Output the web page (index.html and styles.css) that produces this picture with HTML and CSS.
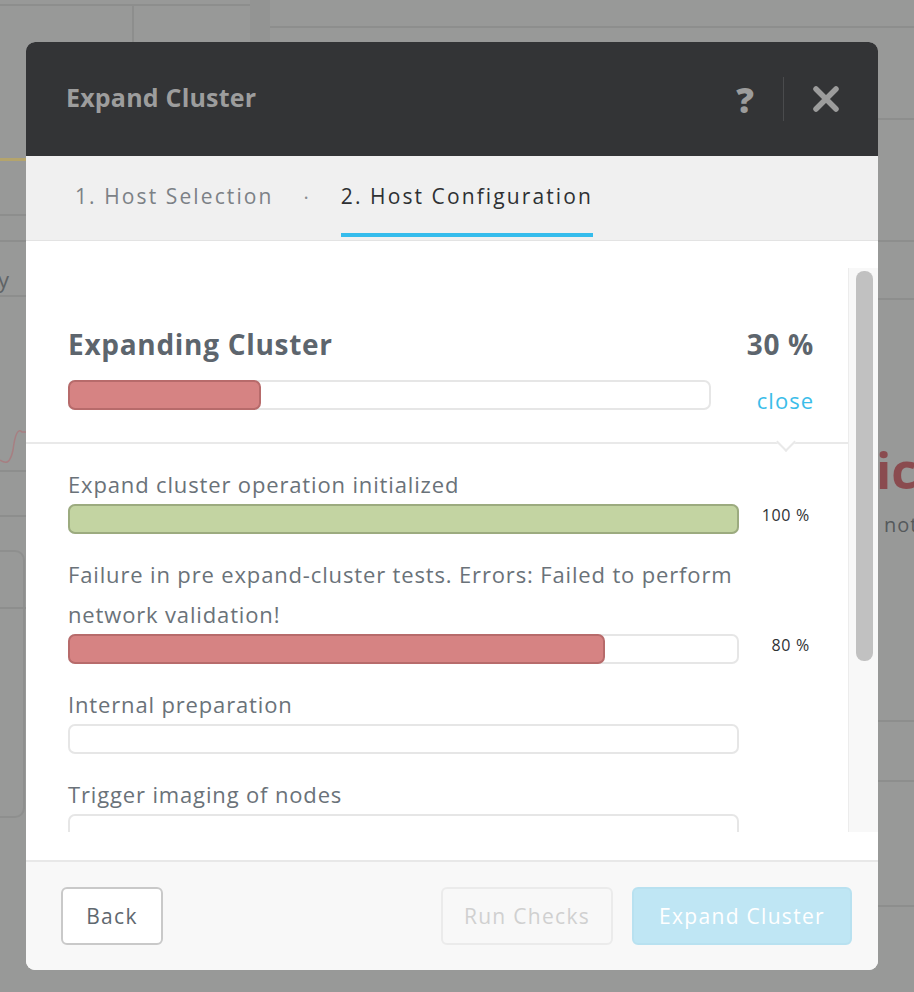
FILE: index.html
```html
<!DOCTYPE html>
<html lang="en">
<head>
<meta charset="utf-8">
<title>Expand Cluster</title>
<link rel="stylesheet" href="styles.css">
</head>
<body>
<div class="backdrop">
  <div class="bg-line h" style="left:0;top:4px;width:250px"></div>
  <div class="bg-line v" style="left:132px;top:5px;height:37px"></div>
  <div class="bg-strip" style="left:250px;top:0;width:20px;height:42px"></div>
  <div class="bg-line h" style="left:270px;top:26px;width:644px"></div>
  <div class="bg-line h" style="left:878px;top:118px;width:36px"></div>
  <div class="bg-line h yellow" style="left:0;top:158px;width:26px"></div>
  <div class="bg-line h" style="left:0;top:214px;width:26px"></div>
  <div class="bg-line h" style="left:0;top:240px;width:26px"></div>
  <div class="bg-text" style="left:-2px;top:264px">y</div>
  <div class="bg-line h" style="left:0;top:295px;width:26px"></div>
  <div class="bg-line h" style="left:0;top:470px;width:26px"></div>
  <div class="bg-line h" style="left:0;top:515px;width:26px"></div>
  <div class="bg-box" style="left:-20px;top:550px;width:45px;height:268px"></div>
  <div class="bg-line h" style="left:0;top:607px;width:26px"></div>
  <svg class="bg-chart" style="left:0;top:420px" width="26" height="50" viewBox="0 0 26 50"><path d="M0 40 C6 44 10 44 13 30 C15 14 18 8 22 12 L26 12" fill="none" stroke="#a77f82" stroke-width="1.5"/></svg>
  <div class="bg-line h" style="left:878px;top:240px;width:36px"></div>
  <div class="bg-line h" style="left:878px;top:298px;width:36px"></div>
  <div class="bg-big" style="left:876px;top:436px">ic</div>
  <div class="bg-small" style="left:884px;top:511px">not</div>
  <div class="bg-line h" style="left:878px;top:720px;width:36px"></div>
  <div class="bg-line h" style="left:878px;top:780px;width:36px"></div>
  <div class="bg-line h" style="left:878px;top:905px;width:36px"></div>
</div>

<div class="modal">
  <header class="modal-header">
    <h1 class="modal-title">Expand Cluster</h1>
    <div class="header-actions">
      <span class="help">?</span>
      <span class="sep"></span>
      <svg class="close-x" width="28" height="28" viewBox="0 0 28 28"><path d="M4 4 L24 24 M24 4 L4 24" stroke="#9c9c9c" stroke-width="5.5" stroke-linecap="round"/></svg>
    </div>
  </header>

  <nav class="tabs">
    <span class="tab">1. Host Selection</span>
    <span class="tab-dot">·</span>
    <span class="tab active">2. Host Configuration</span>
  </nav>

  <section class="modal-body">
    <div class="scroll">
      <div class="scroll-content">
        <div class="summary">
          <div class="summary-head">
            <span class="summary-title">Expanding Cluster</span>
            <span class="summary-pct">30 %</span>
          </div>
          <div class="summary-bar-row">
            <div class="bar big"><div class="fill red" style="width:calc(30% + 1px)"></div></div>
            <a class="close-link">close</a>
          </div>
        </div>
        <div class="divider"><span class="caret"></span></div>

        <div class="task">
          <div class="task-label">Expand cluster operation initialized</div>
          <div class="task-row">
            <div class="bar"><div class="fill green" style="width:calc(100% + 4px)"></div></div>
            <span class="task-pct">100 %</span>
          </div>
        </div>
        <div class="task">
          <div class="task-label">Failure in pre expand-cluster tests. Errors: Failed to perform network validation!</div>
          <div class="task-row">
            <div class="bar"><div class="fill red" style="width:calc(80% + 3px)"></div></div>
            <span class="task-pct">80 %</span>
          </div>
        </div>
        <div class="task">
          <div class="task-label">Internal preparation</div>
          <div class="task-row">
            <div class="bar"></div>
            <span class="task-pct"></span>
          </div>
        </div>
        <div class="task">
          <div class="task-label">Trigger imaging of nodes</div>
          <div class="task-row">
            <div class="bar"></div>
            <span class="task-pct"></span>
          </div>
        </div>
      </div>
      <div class="scrollbar"><div class="thumb"></div></div>
    </div>
  </section>

  <footer class="modal-footer">
    <button class="btn btn-back">Back</button>
    <div class="footer-right">
      <button class="btn btn-disabled">Run Checks</button>
      <button class="btn btn-primary-disabled">Expand Cluster</button>
    </div>
  </footer>
</div>
</body>
</html>
```

FILE: styles.css
```css
* { box-sizing: border-box; }
html, body { margin: 0; padding: 0; }
body {
  width: 914px;
  height: 992px;
  background: #989998;
  font-family: "Open Sans", "Lato", sans-serif;
  overflow: hidden;
  position: relative;
}

/* backdrop page */
.backdrop { position: absolute; inset: 0; }
.bg-line { position: absolute; background: #8d8e8d; }
.bg-line.h { height: 2px; }
.bg-line.v { width: 2px; }
.bg-line.yellow { background: #b4a46c; height: 3px; }
.bg-strip { position: absolute; background: #939493; }
.bg-box { position: absolute; border: 2px solid #8e8f8e; border-radius: 10px; }
.bg-chart { position: absolute; }
.bg-text { position: absolute; font-size: 22px; color: #5f6366; }
.bg-big { position: absolute; font-size: 50px; font-weight: 700; color: #8a4b4f; }
.bg-small { position: absolute; font-size: 20px; color: #55595c; letter-spacing: 1px; }

/* modal */
.modal {
  position: relative;
  margin: 42px 0 0 26px;
  width: 852px;
  height: 928px;
  border-radius: 9px;
  overflow: hidden;
  display: flex;
  flex-direction: column;
  background: #fff;
}
.modal-header {
  height: 114px;
  flex: none;
  background: #333436;
  display: flex;
  align-items: center;
  justify-content: space-between;
  padding: 0 38px 4px 40px;
}
.modal-title {
  margin: 0;
  font-size: 25px;
  font-weight: 700;
  color: #9d9d9d;
  letter-spacing: 0.2px;
}
.header-actions {
  display: flex;
  align-items: center;
  padding-top: 4px;
}
.help {
  font-size: 35px;
  font-weight: 800;
  color: #9c9c9c;
  line-height: 1;
  margin-right: 29px;
}
.sep {
  width: 1px;
  height: 44px;
  background: #4a4b4d;
  margin-right: 28px;
}
.close-x { display: block; }

.tabs {
  height: 85px;
  flex: none;
  background: #f0f0f0;
  border-bottom: 1px solid #e3e3e3;
  display: flex;
  align-items: stretch;
  padding: 0 0 3px 49px;
}
.tab {
  display: flex;
  align-items: center;
  font-size: 21px;
  letter-spacing: 2.1px;
  color: #7c8186;
  border-bottom: 4px solid transparent;
  padding-top: 2px;
}
.tab.active {
  color: #2e3033;
  border-bottom-color: #35bcec;
  padding: 2px 0 0 0;
  margin-left: 2px;
}
.tab-dot {
  display: flex;
  align-items: center;
  color: #8a8d90;
  font-size: 20px;
  margin: 0 30px 0 30px;
  padding-top: 2px;
}

.modal-body {
  flex: 1;
  padding: 27px 0 28px 0;
  background: #fff;
  min-height: 0;
}
.scroll {
  height: 100%;
  display: flex;
}
.scroll-content {
  flex: 1;
  overflow: hidden;
  padding-top: 60px;
}
.scrollbar {
  width: 30px;
  flex: none;
  background: #f8f8f8;
  border-left: 1px solid #ececec;
  padding: 3px 5px 0 7px;
}
.thumb {
  height: 390px;
  background: #c1c1c1;
  border-radius: 8px;
}

.summary { padding: 0 34px 0 42px; }
.summary-head {
  display: flex;
  justify-content: space-between;
  align-items: center;
  height: 32px;
}
.summary-title {
  font-size: 28px;
  font-weight: 700;
  color: #5d656d;
  letter-spacing: 0.7px;
}
.summary-pct {
  font-size: 28px;
  font-weight: 700;
  color: #5d656d;
  letter-spacing: 0.7px;
}
.summary-bar-row {
  display: flex;
  align-items: flex-start;
  justify-content: space-between;
  margin-top: 20px;
}
.close-link {
  font-size: 22px;
  line-height: 30px;
  color: #3bbde9;
  margin-top: 5px;
  letter-spacing: 1px;
}

.bar {
  width: 671px;
  height: 30px;
  border: 2px solid #e6e6e6;
  border-radius: 7px;
  background: #fff;
  flex: none;
}
.bar.big { width: 643px; }
.fill {
  height: calc(100% + 4px);
  margin: -2px;
  border-radius: 7px;
  border: 2px solid;
}
.fill.red { background: #d68383; border-color: #b76b6b; }
.fill.green { background: #c3d4a2; border-color: #9cab7f; }

.divider {
  position: relative;
  height: 2px;
  background: #e9e9e9;
  margin: 27px 0 20px 0;
}
.caret {
  position: absolute;
  left: 753px;
  top: 0;
  width: 14px;
  height: 14px;
  background: #fff;
  border-right: 2px solid #e9e9e9;
  border-bottom: 2px solid #e9e9e9;
  transform: translateY(-7px) rotate(45deg);
}

.task {
  padding: 0 38px 0 42px;
  margin-bottom: 20px;
}
.task-label {
  font-size: 22px;
  line-height: 40px;
  letter-spacing: 0.85px;
  color: #6a7279;
  width: 675px;
}
.task-row {
  display: flex;
  justify-content: space-between;
  align-items: flex-start;
}
.task-pct {
  font-size: 16px;
  line-height: 22px;
  letter-spacing: 0.7px;
  color: #2f3133;
}

.modal-footer {
  height: 110px;
  flex: none;
  background: #f8f8f8;
  border-top: 2px solid #e8e8e8;
  display: flex;
  justify-content: space-between;
  align-items: flex-start;
  padding: 25px 26px 0 35px;
}
.footer-right { display: flex; gap: 19px; }
.btn {
  height: 58px;
  font-family: "Open Sans", "Lato", sans-serif;
  font-size: 21px;
  letter-spacing: 1.3px;
  border-radius: 6px;
  padding: 0 4px;
  background: #fff;
  cursor: default;
}
.btn-back {
  width: 102px;
  border: 2px solid #c9c9c9;
  color: #5f686f;
}
.btn-disabled {
  width: 172px;
  border: 2px solid #ebebeb;
  background: #f8f8f8;
  color: #d0d0d0;
}
.btn-primary-disabled {
  width: 220px;
  border: 2px solid #b8e1f0;
  background: #bfe6f4;
  color: #ffffff;
}
```
